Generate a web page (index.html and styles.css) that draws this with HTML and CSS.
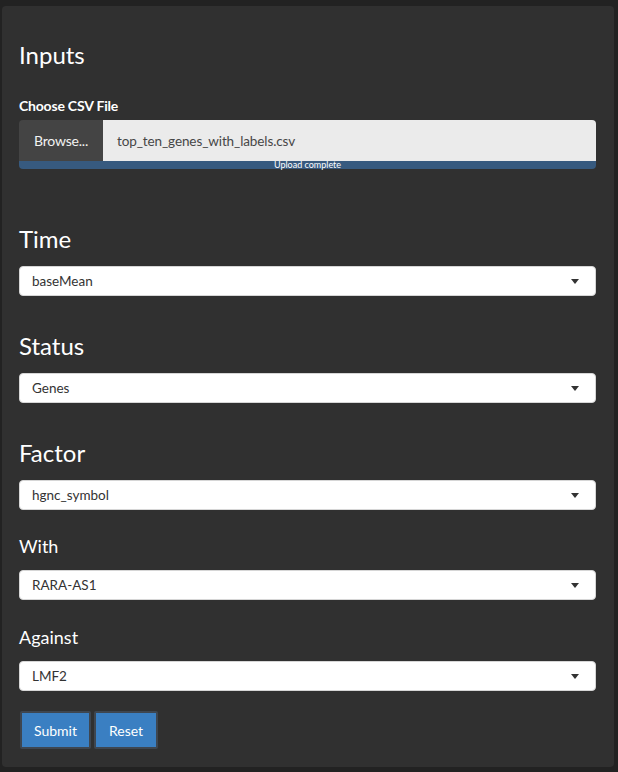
FILE: index.html
```html
<!DOCTYPE html>
<html>
<head>
<meta charset="utf-8">
<link rel="stylesheet" href="styles.css">
</head>
<body>
<div class="page">
  <div class="well">
    <h3 class="heading">Inputs</h3>
    <label class="file-label">Choose CSV File</label>
    <div class="file-group">
      <div class="browse">Browse...</div>
      <div class="file-name">top_ten_genes_with_labels.csv</div>
    </div>
    <div class="progress">Upload complete</div>

    <h3 class="heading heading-gap-lg">Time</h3>
    <div class="select"><span>baseMean</span><span class="caret"></span></div>

    <h3 class="heading heading-gap">Status</h3>
    <div class="select"><span>Genes</span><span class="caret"></span></div>

    <h3 class="heading heading-gap">Factor</h3>
    <div class="select"><span>hgnc_symbol</span><span class="caret"></span></div>

    <h4 class="subheading">With</h4>
    <div class="select"><span>RARA-AS1</span><span class="caret"></span></div>

    <h4 class="subheading subheading-b">Against</h4>
    <div class="select"><span>LMF2</span><span class="caret"></span></div>

    <div class="buttons">
      <button class="btn btn-submit">Submit</button>
      <button class="btn btn-reset">Reset</button>
    </div>
  </div>
</div>
</body>
</html>
```

FILE: styles.css
```css
html, body {
  margin: 0;
  padding: 0;
  background: #222222;
  font-family: Lato, "Open Sans", sans-serif;
  color: #ffffff;
}

.page {
  padding: 6px 4px 5px 2px;
}

.well {
  background: #303030;
  border-radius: 4px;
  padding: 35px 18px 18px 17px;
  display: flex;
  flex-direction: column;
}

.heading {
  margin: 0;
  font-size: 24px;
  font-weight: 400;
  line-height: 28px;
  color: #ffffff;
}

.heading-gap-lg {
  margin-top: 56px;
}

.heading-gap {
  margin-top: 36px;
}

.subheading {
  margin: 25px 0 0 0;
  font-size: 18px;
  font-weight: 400;
  line-height: 22px;
  color: #ffffff;
}

.subheading-b {
  margin-top: 26px;
}

.file-label {
  display: block;
  margin-top: 27px;
  font-size: 14px;
  font-weight: 700;
  line-height: 20px;
  letter-spacing: -0.2px;
}

.file-group {
  margin-top: 4px;
  height: 41px;
  display: flex;
}

.browse {
  width: 84px;
  background: #444444;
  color: #f2f2f2;
  font-size: 14px;
  letter-spacing: -0.2px;
  display: flex;
  align-items: center;
  justify-content: center;
  border-radius: 4px 0 0 0;
}

.file-name {
  flex: 1;
  background: #ebebeb;
  color: #464646;
  font-size: 13.5px;
  letter-spacing: -0.1px;
  display: flex;
  align-items: center;
  padding-left: 14px;
  border-radius: 0 4px 0 0;
}

.progress {
  height: 8px;
  background: #375a7f;
  border-radius: 0 0 4px 4px;
  color: #ffffff;
  font-size: 9px;
  line-height: 8px;
  text-align: center;
}

.select {
  margin-top: 13px;
  height: 30px;
  box-sizing: border-box;
  background: #ffffff;
  border: 1px solid #d6d6d6;
  border-radius: 4px;
  color: #333333;
  font-size: 13.5px;
  padding: 0 16px 0 12px;
  display: flex;
  align-items: center;
  justify-content: space-between;
}

.caret {
  width: 0;
  height: 0;
  border-left: 4.5px solid transparent;
  border-right: 4.5px solid transparent;
  border-top: 5px solid #333333;
}

.buttons {
  margin-top: 20px;
  display: flex;
  gap: 3px;
  padding-left: 1px;
}

.btn {
  height: 38px;
  box-sizing: border-box;
  border: 2px solid #3e4650;
  background: #3a7fc2;
  color: #ffffff;
  font-family: Lato, "Open Sans", sans-serif;
  font-size: 14px;
  padding: 0;
  border-radius: 2px;
}

.btn-submit {
  width: 71px;
}

.btn-reset {
  width: 64px;
}
```
